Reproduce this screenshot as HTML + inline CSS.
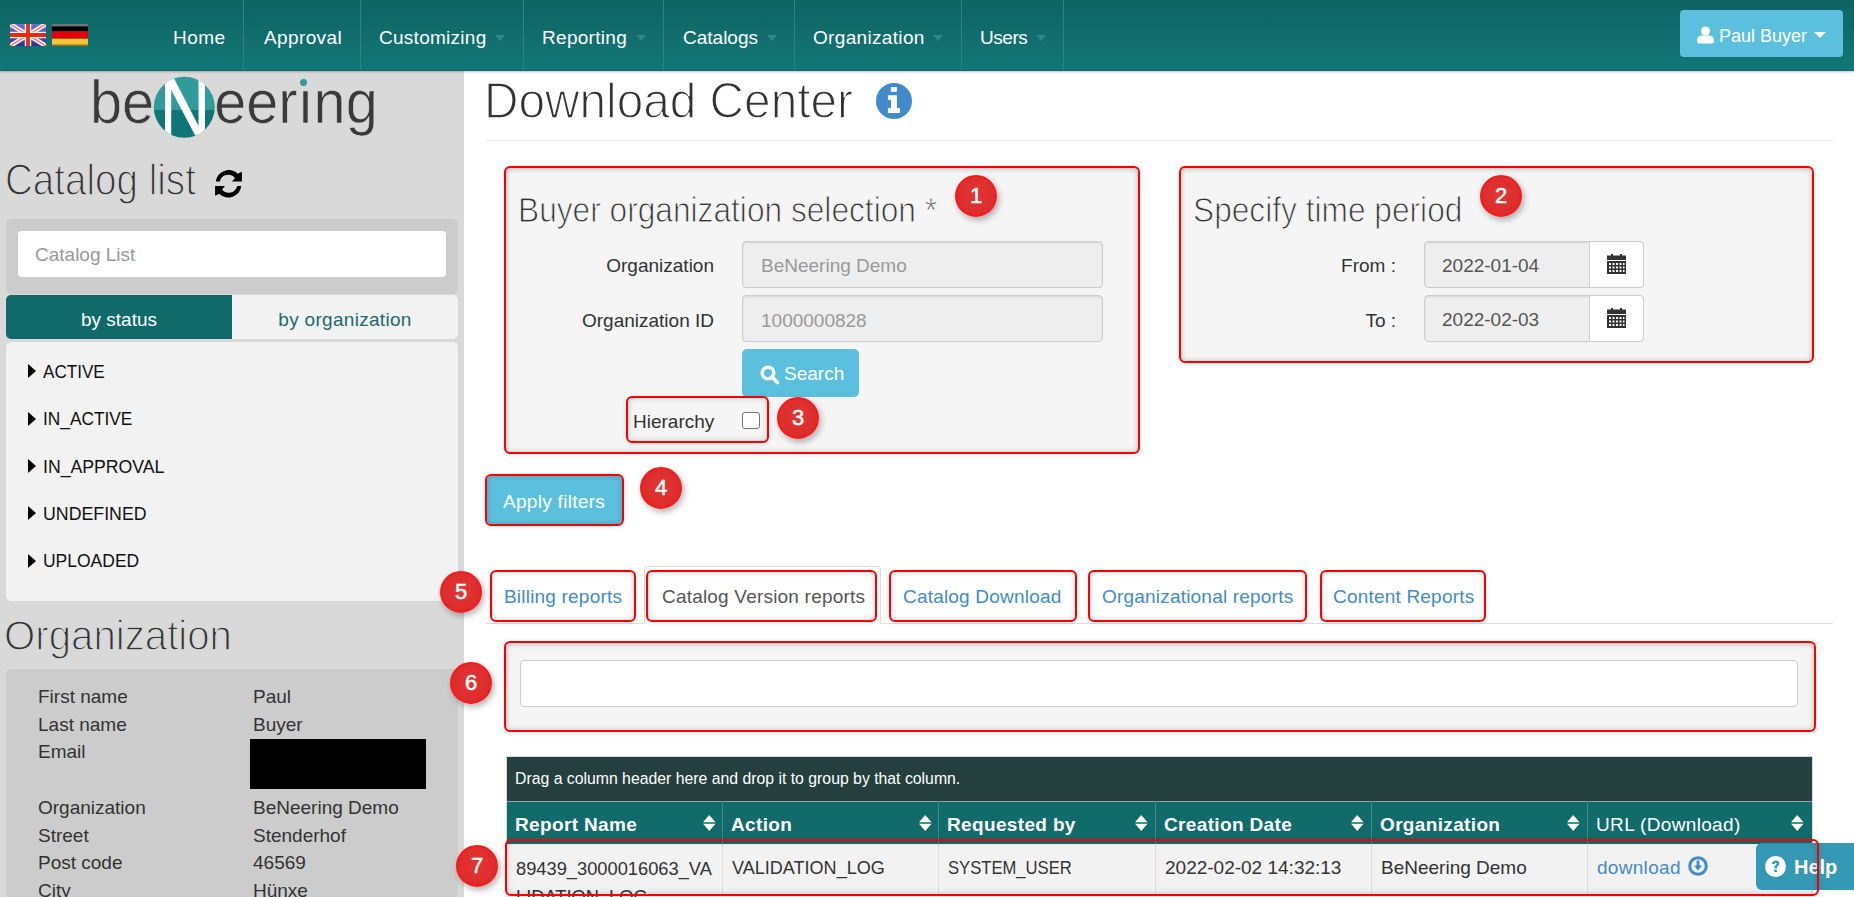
<!DOCTYPE html>
<html><head><meta charset="utf-8">
<style>
*{box-sizing:border-box;margin:0;padding:0}
html,body{width:1854px;height:897px;overflow:hidden;background:#fff;font-family:"Liberation Sans",sans-serif;color:#333}
.a{position:absolute;white-space:nowrap}
.t20{font-size:19px;line-height:20px}
#nav{position:absolute;left:0;top:0;width:1854px;height:71px;background:linear-gradient(#0f6363,#137777);border-bottom:1px solid #106a6a;box-shadow:0 1px 2px rgba(0,0,0,.25);z-index:5}
.navi{position:absolute;top:0;height:70px;color:#fff;font-size:19px;line-height:76px;white-space:nowrap}
.sep{position:absolute;top:0;width:1px;height:70px;background:#2a8585}
.caret{display:inline-block;width:0;height:0;border-left:5.5px solid transparent;border-right:5.5px solid transparent;border-top:6px solid #2f8787;vertical-align:middle;margin-left:8.5px;position:relative;top:-1px}
.light{color:#333;transform-origin:0 0;-webkit-text-stroke:1.4px #fff}
.sl{-webkit-text-stroke-color:#d9d9d9}
.wl{-webkit-text-stroke-color:#f5f5f5;-webkit-text-stroke-width:1px}
.badge{position:absolute;width:42px;height:42px;border-radius:50%;background:radial-gradient(circle at 50% 45%,#e43535 0,#dc2c2c 70%,#d02020 100%);border:2px solid #f81a1a;box-shadow:2px 3px 6px rgba(0,0,0,.3);color:#fff;font-weight:normal;font-size:22px;line-height:38px;text-align:center;-webkit-text-stroke:.5px #fff}
.rbox{position:absolute;border:2px solid #f80000;border-radius:6px;box-shadow:0 1px 5px rgba(0,0,0,.1),inset 0 0 6px rgba(0,0,0,.18)}
.well{background:#f5f5f5;box-shadow:0 1px 5px rgba(0,0,0,.1),inset 0 0 6px rgba(0,0,0,.18),inset 0 2px 4px rgba(0,0,0,.08)}
.inp{position:absolute;background:#eee;border:1px solid #ccc;box-shadow:inset 0 1px 2px rgba(0,0,0,.1);border-radius:4px;font-size:19px;color:#999;padding-left:18px;line-height:45px;white-space:nowrap}
.tab{position:absolute;top:570px;height:52px;border:2px solid #f80000;border-radius:6px;box-shadow:0 1px 5px rgba(0,0,0,.1),inset 0 0 6px rgba(0,0,0,.18);font-size:19px;color:#428bca;line-height:50px;white-space:nowrap;letter-spacing:.2px}
.li{position:absolute;left:43px;font-size:19px;line-height:20px;color:#111;white-space:nowrap;transform:scaleX(.91);transform-origin:0 0}
.tri{position:absolute;left:28px;width:0;height:0;border-top:7px solid transparent;border-bottom:7px solid transparent;border-left:8px solid #000}
.ol{position:absolute;left:38px;font-size:19px;line-height:20px;color:#333;white-space:nowrap}
.ov{position:absolute;left:253px;font-size:19px;line-height:20px;color:#333;white-space:nowrap}
.th{position:absolute;top:801px;height:43px;color:#fff;font-weight:bold;font-size:19px;line-height:20px;padding-top:14px;padding-left:8px;white-space:nowrap;letter-spacing:.35px}
.td{position:absolute;font-size:19px;line-height:20px;color:#333;white-space:nowrap}
.csep{position:absolute;width:1px}
.sort{position:absolute;top:814.5px;width:12.5px;height:16px}
.cal{position:absolute;width:19px;height:20px}
</style></head><body>
<div id="nav">
  <svg class="a" style="left:10px;top:24px" width="36" height="22" viewBox="0 0 36 22">
    <defs><linearGradient id="ukg" x1="0" y1="0" x2="0" y2="1"><stop offset="0" stop-color="#7070d0"/><stop offset="1" stop-color="#30308a"/></linearGradient></defs>
    <rect width="36" height="22" fill="url(#ukg)"/>
    <path d="M0 0L36 22M36 0L0 22" stroke="#f4eeee" stroke-width="4.5"/>
    <path d="M0 0L36 22M36 0L0 22" stroke="#ee6a55" stroke-width="1.2"/>
    <path d="M18 0V22M0 11H36" stroke="#fbf5f5" stroke-width="6.5"/>
    <path d="M18 0V22M0 11H36" stroke="#ea2a0a" stroke-width="3.8"/>
  </svg>
  <svg class="a" style="left:52px;top:24px" width="36" height="22" viewBox="0 0 36 22">
    <rect width="36" height="7.3" fill="#000"/><rect y="7.3" width="36" height="7.4" fill="#e20000"/><rect y="14.7" width="36" height="7.3" fill="#f5c63a"/>
    <rect width="36" height="2.4" fill="#888" opacity=".85"/><rect y="20.5" width="36" height="1.5" fill="#6a5010" opacity=".7"/>
  </svg>
  <div class="navi" style="left:173px;letter-spacing:.5px">Home</div>
  <div class="sep" style="left:243px"></div>
  <div class="navi" style="left:264px;letter-spacing:.38px">Approval</div>
  <div class="sep" style="left:360px"></div>
  <div class="navi" style="left:379px"><span style="letter-spacing:.27px">Customizing</span><span class="caret"></span></div>
  <div class="sep" style="left:523px"></div>
  <div class="navi" style="left:542px"><span style="letter-spacing:.3px">Reporting</span><span class="caret"></span></div>
  <div class="sep" style="left:663px"></div>
  <div class="navi" style="left:683px">Catalogs<span class="caret"></span></div>
  <div class="sep" style="left:794px"></div>
  <div class="navi" style="left:813px"><span style="letter-spacing:.33px">Organization</span><span class="caret"></span></div>
  <div class="sep" style="left:961px"></div>
  <div class="navi" style="left:980px"><span style="letter-spacing:-.45px">Users</span><span class="caret"></span></div>
  <div class="sep" style="left:1063px"></div>
  <div class="a" style="left:1680px;top:10px;width:163px;height:47px;background:#5bc0de;border-radius:4px;color:#fff;font-size:18px;line-height:52px;padding-left:39px">Paul Buyer</div>
  <svg class="a" style="left:1697px;top:26px" width="17" height="18" viewBox="0 0 17 18"><circle cx="8.5" cy="5" r="4.6" fill="#fff"/><path d="M0 15.5V14C0 11 2 9.5 4.5 9.5H12.5C15 9.5 17 11 17 14V15.5Q17 17.5 15 17.5H2Q0 17.5 0 15.5Z" fill="#fff"/></svg>
  <div class="a" style="left:1813.5px;top:32px;width:0;height:0;border-left:6.2px solid transparent;border-right:6.2px solid transparent;border-top:6.5px solid #fff"></div>
</div>

<!-- SIDEBAR -->
<div class="a" style="left:0;top:71px;width:464px;height:826px;background:#d9d9d9"></div>
<div class="a" style="left:89.5px;top:67px;font-size:62px;line-height:70px;color:#3a3a3a;transform:scaleX(.93);transform-origin:0 0;-webkit-text-stroke:.7px #d9d9d9">be<span style="display:inline-block;width:64.6px"></span>eer&#305;ng</div>
<div class="a" style="left:299.5px;top:79px;width:7px;height:7px;border-radius:50%;background:#2f9b9b"></div>
<svg class="a" style="left:153px;top:76px" width="62" height="62" viewBox="0 0 62 62">
  <defs><clipPath id="cc"><circle cx="31.3" cy="31.2" r="30.5"/></clipPath></defs>
  <g clip-path="url(#cc)"><rect width="62" height="34" fill="#2f9b9b"/><rect y="34" width="62" height="28" fill="#0e7676"/>
  <rect x="12" y="0" width="6.2" height="62" fill="#fff"/><rect x="45.5" y="0" width="6.5" height="62" fill="#fff"/>
  <path d="M12.5 3H21.3L50.5 59.6H42.2Z" fill="#fff"/></g>
</svg>
<div class="a light sl" style="left:5px;top:150px;font-size:44px;line-height:60px;transform:scaleX(.877)">Catalog list</div>
<svg class="a" style="left:210px;top:166px" width="38" height="36" viewBox="0 0 38 36">
  <path d="M5.8 15.6A13 13 0 0 1 27.7 7.8L31.9 5.8V15.6H22L24.9 12.1A8.6 8.6 0 0 0 9.8 15.6Z" fill="#000"/>
  <path d="M31.2 20A13 13 0 0 1 9.3 27.8L5.1 29.8V20H15L12.1 23.5A8.6 8.6 0 0 0 27.2 20Z" fill="#000"/>
</svg>
<div class="a" style="left:6px;top:219px;width:452px;height:75px;background:#ccc;border-radius:5px"></div>
<div class="a" style="left:18px;top:231px;width:428px;height:46px;background:#fff;border-radius:4px;font-size:19px;color:#999;padding-left:17px;padding-top:1px;line-height:46px">Catalog List</div>
<div class="a" style="left:6px;top:295px;width:226px;height:44px;background:#116a6a;border-radius:5px 0 0 5px;color:#fff;font-size:19px;line-height:49px;text-align:center">by status</div>
<div class="a" style="left:232px;top:295px;width:226px;height:44px;background:#f2f2f2;border-radius:0 5px 5px 0;color:#1d6a6a;font-size:19px;line-height:49px;text-align:center;letter-spacing:.3px">by organization</div>
<div class="a" style="left:6px;top:342px;width:452px;height:259px;background:#f2f2f2;border-radius:5px"></div>
<div class="tri" style="top:364px"></div><div class="li" style="top:362px;transform:scaleX(.9)">ACTIVE</div>
<div class="tri" style="top:412px"></div><div class="li" style="top:409px">IN_ACTIVE</div>
<div class="tri" style="top:459px"></div><div class="li" style="top:457px;transform:scaleX(.93)">IN_APPROVAL</div>
<div class="tri" style="top:506px"></div><div class="li" style="top:504px;transform:scaleX(.935)">UNDEFINED</div>
<div class="tri" style="top:554px"></div><div class="li" style="top:551px;transform:scaleX(.92)">UPLOADED</div>
<div class="a light sl" style="left:4px;top:607px;font-size:43px;line-height:56px;transform:scaleX(.935)">Organization</div>
<div class="a" style="left:6px;top:669px;width:452px;height:240px;background:#ccc;border-radius:5px"></div>
<div class="ol" style="top:687px">First name</div><div class="ov" style="top:687px">Paul</div>
<div class="ol" style="top:715px">Last name</div><div class="ov" style="top:715px">Buyer</div>
<div class="ol" style="top:742px">Email</div>
<div class="a" style="left:250px;top:739px;width:176px;height:50px;background:#000"></div>
<div class="ol" style="top:798px">Organization</div><div class="ov" style="top:798px">BeNeering Demo</div>
<div class="ol" style="top:826px">Street</div><div class="ov" style="top:826px">Stenderhof</div>
<div class="ol" style="top:853px">Post code</div><div class="ov" style="top:853px">46569</div>
<div class="ol" style="top:881px">City</div><div class="ov" style="top:881px">Hünxe</div>

<!-- MAIN -->
<div class="a light" style="left:484px;top:71px;font-size:50px;line-height:60px;transform:scaleX(.955)">Download Center</div>
<svg class="a" style="left:876px;top:83px" width="36" height="36" viewBox="0 0 36 36">
  <circle cx="18" cy="18" r="18" fill="#428bca"/>
  <path d="M14.8 4H20.9V8.8H14.8ZM11.9 12.2H20.9V25H24V30.1H11.9V25H15V17H11.9Z" fill="#fff"/>
</svg>
<div class="a" style="left:486px;top:140px;width:1347px;height:1px;background:#e6e6e6"></div>

<!-- box 1 -->
<div class="rbox well" style="left:504px;top:166px;width:636px;height:288px"></div>
<div class="a light wl" style="left:517.5px;top:190px;font-size:35px;line-height:40px;transform:scaleX(.905)">Buyer organization selection *</div>
<div class="a t20" style="left:714px;top:256px;transform:translateX(-100%)">Organization</div>
<div class="a t20" style="left:714px;top:311px;transform:translateX(-100%)">Organization ID</div>
<div class="inp" style="left:742px;top:241px;width:361px;height:47px;padding-top:1px">BeNeering Demo</div>
<div class="inp" style="left:742px;top:295px;width:361px;height:47px;padding-top:2px">1000000828</div>
<div class="a" style="left:742px;top:349px;width:117px;height:48px;background:#5bc0de;border-radius:5px;color:#fff;font-size:19px;line-height:20px;padding-left:42px;padding-top:15px">Search</div>
<svg class="a" style="left:760px;top:365px" width="20" height="20" viewBox="0 0 20 20"><circle cx="8" cy="8" r="5.8" fill="none" stroke="#fff" stroke-width="3.4"/><path d="M12 12L17.5 17.5" stroke="#fff" stroke-width="3.6" stroke-linecap="round"/></svg>
<div class="rbox" style="left:626px;top:396px;width:143px;height:47px"></div>
<div class="a t20" style="left:633px;top:412px">Hierarchy</div>
<div class="a" style="left:742px;top:412px;width:18px;height:17px;background:#fff;border:1px solid #767676;border-radius:3px"></div>

<!-- box 2 -->
<div class="rbox well" style="left:1179px;top:166px;width:635px;height:197px"></div>
<div class="a light wl" style="left:1193px;top:190px;font-size:35px;line-height:40px;transform:scaleX(.905)">Specify time period</div>
<div class="a t20" style="left:1396px;top:256px;transform:translateX(-100%)">From :</div>
<div class="a t20" style="left:1396px;top:311px;transform:translateX(-100%)">To :</div>
<div class="inp" style="left:1424px;top:241px;width:220px;height:47px;color:#555;padding-left:17px;border-radius:4px;line-height:45px;padding-top:1px">2022-01-04</div>
<div class="a" style="left:1589px;top:241px;width:55px;height:47px;background:#fff;border:1px solid #ccc;border-radius:0 4px 4px 0"></div>
<div class="inp" style="left:1424px;top:295px;width:220px;height:47px;color:#555;padding-left:17px;line-height:45px;padding-top:1px">2022-02-03</div>
<div class="a" style="left:1589px;top:295px;width:55px;height:47px;background:#fff;border:1px solid #ccc;border-radius:0 4px 4px 0"></div>
<svg class="cal" style="left:1607px;top:254px" viewBox="0 0 19 20"><rect x="0" y="1.5" width="19" height="4.5" fill="#333"/><rect x="4" y="0" width="2" height="3" fill="#333"/><rect x="13" y="0" width="2" height="3" fill="#333"/><rect x="0" y="7" width="19" height="13" fill="#333"/><g fill="#fff"><rect x="2" y="9" width="2" height="2"/><rect x="5.5" y="9" width="2" height="2"/><rect x="9" y="9" width="2" height="2"/><rect x="12.5" y="9" width="2" height="2"/><rect x="16" y="9" width="1.5" height="2"/><rect x="2" y="12.5" width="2" height="2"/><rect x="5.5" y="12.5" width="2" height="2"/><rect x="9" y="12.5" width="2" height="2"/><rect x="12.5" y="12.5" width="2" height="2"/><rect x="16" y="12.5" width="1.5" height="2"/><rect x="2" y="16" width="2" height="2"/><rect x="5.5" y="16" width="2" height="2"/><rect x="9" y="16" width="2" height="2"/><rect x="12.5" y="16" width="2" height="2"/><rect x="16" y="16" width="1.5" height="2"/></g></svg>
<svg class="cal" style="left:1607px;top:308px" viewBox="0 0 19 20"><rect x="0" y="1.5" width="19" height="4.5" fill="#333"/><rect x="4" y="0" width="2" height="3" fill="#333"/><rect x="13" y="0" width="2" height="3" fill="#333"/><rect x="0" y="7" width="19" height="13" fill="#333"/><g fill="#fff"><rect x="2" y="9" width="2" height="2"/><rect x="5.5" y="9" width="2" height="2"/><rect x="9" y="9" width="2" height="2"/><rect x="12.5" y="9" width="2" height="2"/><rect x="16" y="9" width="1.5" height="2"/><rect x="2" y="12.5" width="2" height="2"/><rect x="5.5" y="12.5" width="2" height="2"/><rect x="9" y="12.5" width="2" height="2"/><rect x="12.5" y="12.5" width="2" height="2"/><rect x="16" y="12.5" width="1.5" height="2"/><rect x="2" y="16" width="2" height="2"/><rect x="5.5" y="16" width="2" height="2"/><rect x="9" y="16" width="2" height="2"/><rect x="12.5" y="16" width="2" height="2"/><rect x="16" y="16" width="1.5" height="2"/></g></svg>

<!-- apply filters -->
<div class="a" style="left:487px;top:476px;width:135px;height:48px;background:#5bc0de;border-radius:4px;color:#fff;font-size:19px;line-height:20px;padding-left:16px;padding-top:16px;letter-spacing:.3px">Apply filters</div>
<div class="rbox" style="left:485px;top:474px;width:139px;height:52px"></div>

<!-- tabs -->
<div class="a" style="left:486px;top:623px;width:1347px;height:1px;background:#ddd"></div>
<div class="a" style="left:644px;top:566px;width:237px;height:58px;background:#fff;border:1px solid #ddd;border-bottom:none;border-radius:4px 4px 0 0"></div>
<div class="tab" style="left:490px;width:146px;padding-left:12px">Billing reports</div>
<div class="tab" style="left:646px;width:231px;padding-left:14px;color:#555">Catalog Version reports</div>
<div class="tab" style="left:889px;width:188px;padding-left:12px">Catalog Download</div>
<div class="tab" style="left:1088px;width:219px;padding-left:12px">Organizational reports</div>
<div class="tab" style="left:1320px;width:166px;padding-left:11px">Content Reports</div>

<!-- box 6 -->
<div class="rbox well" style="left:504px;top:641px;width:1312px;height:91px"></div>
<div class="a" style="left:520px;top:660px;width:1278px;height:47px;background:#fff;border:1px solid #ccc;border-radius:4px"></div>

<!-- grid -->
<div class="a" style="left:506px;top:756px;width:1307px;height:141px;border:1px solid #ddd"></div>
<div class="a" style="left:507px;top:757px;width:1305px;height:44px;background:#253f3f"></div>
<div class="a" style="left:507px;top:801px;width:1305px;height:1px;background:#8fa5a5"></div>
<div class="a" style="left:515px;top:769px;font-size:15.8px;line-height:20px;color:#fff">Drag a column header here and drop it to group by that column.</div>
<div class="a" style="left:507px;top:802px;width:1305px;height:42px;background:#116b6b"></div>
<div class="a" style="left:507px;top:844px;width:1305px;height:53px;background:#f2f2f2"></div>
<div class="csep" style="left:722px;top:801px;height:43px;background:#3f8a8a"></div>
<div class="csep" style="left:938px;top:801px;height:43px;background:#3f8a8a"></div>
<div class="csep" style="left:1155px;top:801px;height:43px;background:#3f8a8a"></div>
<div class="csep" style="left:1371px;top:801px;height:43px;background:#3f8a8a"></div>
<div class="csep" style="left:1587px;top:801px;height:43px;background:#3f8a8a"></div>
<div class="csep" style="left:722px;top:844px;height:53px;background:#ddd"></div>
<div class="csep" style="left:938px;top:844px;height:53px;background:#ddd"></div>
<div class="csep" style="left:1155px;top:844px;height:53px;background:#ddd"></div>
<div class="csep" style="left:1371px;top:844px;height:53px;background:#ddd"></div>
<div class="csep" style="left:1587px;top:844px;height:53px;background:#ddd"></div>
<div class="th" style="left:507px">Report Name</div>
<div class="th" style="left:723px">Action</div>
<div class="th" style="left:939px">Requested by</div>
<div class="th" style="left:1156px">Creation Date</div>
<div class="th" style="left:1372px">Organization</div>
<div class="th" style="left:1588px;font-weight:normal">URL (Download)</div>
<svg class="sort" style="left:703px" viewBox="0 0 12.5 16"><path d="M6.25 0L12.5 7.2H0ZM0 8.8H12.5L6.25 16Z" fill="#fff"/></svg>
<svg class="sort" style="left:919px" viewBox="0 0 12.5 16"><path d="M6.25 0L12.5 7.2H0ZM0 8.8H12.5L6.25 16Z" fill="#fff"/></svg>
<svg class="sort" style="left:1135px" viewBox="0 0 12.5 16"><path d="M6.25 0L12.5 7.2H0ZM0 8.8H12.5L6.25 16Z" fill="#fff"/></svg>
<svg class="sort" style="left:1351px" viewBox="0 0 12.5 16"><path d="M6.25 0L12.5 7.2H0ZM0 8.8H12.5L6.25 16Z" fill="#fff"/></svg>
<svg class="sort" style="left:1567px" viewBox="0 0 12.5 16"><path d="M6.25 0L12.5 7.2H0ZM0 8.8H12.5L6.25 16Z" fill="#fff"/></svg>
<svg class="sort" style="left:1791px" viewBox="0 0 12.5 16"><path d="M6.25 0L12.5 7.2H0ZM0 8.8H12.5L6.25 16Z" fill="#fff"/></svg>
<div class="td" style="left:516px;top:854.5px;font-size:18.3px;line-height:28px">89439_3000016063_VA<br>LIDATION_LOG</div>
<div class="td" style="left:732px;top:858px;transform:scaleX(.95);transform-origin:0 0">VALIDATION_LOG</div>
<div class="td" style="left:948px;top:858px;transform:scaleX(.875);transform-origin:0 0">SYSTEM_USER</div>
<div class="td" style="left:1165px;top:858px">2022-02-02 14:32:13</div>
<div class="td" style="left:1381px;top:858px">BeNeering Demo</div>
<div class="td" style="left:1597px;top:858px;color:#428bca;letter-spacing:.3px">download</div>
<svg class="a" style="left:1688px;top:856px" width="20" height="20" viewBox="0 0 20 20"><circle cx="10" cy="10" r="8.3" fill="none" stroke="#428bca" stroke-width="3"/><path d="M8.6 4.5H11.4V9.5H14L10 14.5L6 9.5H8.6Z" fill="#428bca"/></svg>
<div class="a" style="left:1756px;top:843px;width:110px;height:47px;background:#3598b5;border-radius:6px;color:#fff;font-weight:bold;font-size:20px;line-height:20px;padding-left:38px;padding-top:14px">Help</div>
<svg class="a" style="left:1765px;top:856px" width="21" height="21" viewBox="0 0 21 21"><circle cx="10.5" cy="10.5" r="10.5" fill="#fff"/><path d="M7 8C7 5.8 8.6 4.5 10.7 4.5C12.8 4.5 14.3 5.8 14.3 7.6C14.3 9.8 11.9 10 11.9 12.2H9.3C9.3 9.2 11.6 9 11.6 7.7C11.6 7 11.1 6.8 10.6 6.8C10 6.8 9.6 7.2 9.6 8Z" fill="#3598b5"/><rect x="9.3" y="13.5" width="2.6" height="2.6" fill="#3598b5"/></svg>
<div class="rbox" style="left:505px;top:838.5px;width:1314px;height:57.5px;border-radius:6px"></div>

<!-- badges -->
<div class="badge" style="left:955px;top:175px">1</div>
<div class="badge" style="left:1480px;top:175px">2</div>
<div class="badge" style="left:777px;top:397px">3</div>
<div class="badge" style="left:640px;top:467px">4</div>
<div class="badge" style="left:440px;top:571px">5</div>
<div class="badge" style="left:450px;top:662px">6</div>
<div class="badge" style="left:456px;top:845px">7</div>
</body></html>
